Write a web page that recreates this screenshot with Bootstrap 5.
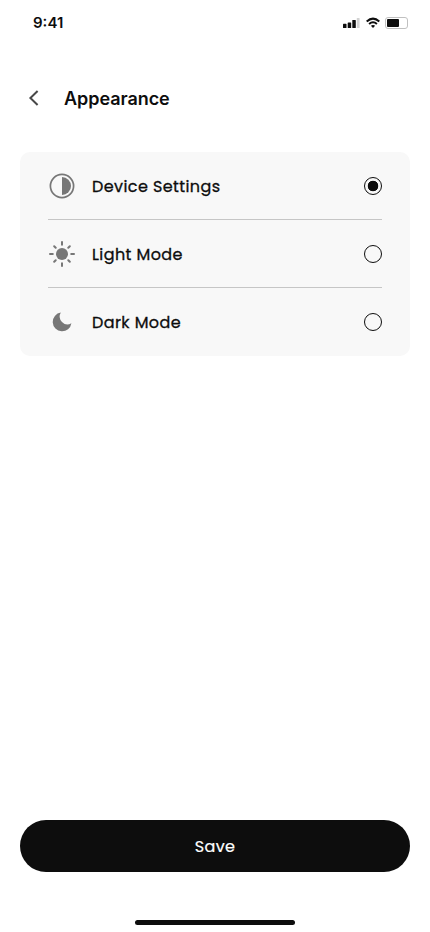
<!DOCTYPE html>
<html lang="en">
<head>
<meta charset="utf-8">
<meta name="viewport" content="width=device-width, initial-scale=1">
<title>Appearance</title>
<link href="https://cdn.jsdelivr.net/npm/bootstrap@5.3.0/dist/css/bootstrap.min.css" rel="stylesheet">
<style>
body{font-family:Inter,"Liberation Sans",sans-serif;color:#0d0d0d;height:932px;background:#fff;overflow:hidden}
svg{display:block;flex:none}
.status-bar{height:45px;padding:0 22px 0 33px}
.clock{font-size:15px;font-weight:600;line-height:20px;letter-spacing:0}
.page-head{height:107px;padding:0 28px}
.page-head svg{margin-bottom:1px}
.page-title{font-size:18px;font-weight:600;line-height:24px;margin:0 0 0 22px;letter-spacing:-.05px}
.options{margin:0 20px;padding:0 28px;background:#f8f8f8;border-radius:10px}
.option{height:68px;border-bottom:1px solid #c6c6c6;font-family:Poppins,Inter,sans-serif;font-size:16px;font-weight:400;cursor:pointer;-webkit-text-stroke:.3px #0d0d0d}
.option:last-child{border-bottom:0}
.option-name{margin-left:16px;padding-top:2px;letter-spacing:.41px}
.option .form-check-input{width:18px;height:18px;margin:0;border:1.25px solid #0d0d0d;background-color:transparent;box-shadow:none}
.option .form-check-input:checked{background-image:radial-gradient(circle,#0d0d0d 5px,transparent 5.6px);background-size:100% 100%;background-origin:border-box}
.save-btn{height:52px;margin:0 20px;padding-top:8px;background:#0d0d0d;color:#fff;font-family:Poppins,Inter,sans-serif;font-size:16px;font-weight:400;letter-spacing:.3px;-webkit-text-stroke:.2px #fff}
.save-btn:hover{background:#222;color:#fff}
.home-bar{width:160px;height:5px;margin:48px auto 7px;border-radius:3px;background:#0d0d0d}
</style>
</head>
<body class="d-flex flex-column">
<div class="status-bar d-flex align-items-center justify-content-between">
  <span class="clock">9:41</span>
  <svg width="65" height="12" viewBox="0 0 65 12" aria-hidden="true">
    <g fill="#0d0d0d"><rect y="6.8" width="3.5" height="4.2" rx=".6"/><rect x="4.7" y="5.4" width="3.5" height="5.6" rx=".6"/><rect x="9.3" y="3" width="3.5" height="8" rx=".6"/></g>
    <rect x="13.8" y="1" width="2.8" height="10" rx=".6" fill="#d2d2d2"/>
    <g fill="none" stroke="#0d0d0d" stroke-width="2"><path d="M23.7 4.5Q30 -1.2 36.3 4.5"/><path d="M26.1 7.1Q30 3.5 33.9 7.1"/></g>
    <path d="M27.9 8.8Q30 7.2 32.1 8.8L30 11Z" fill="#0d0d0d"/>
    <rect x="42.5" y=".5" width="22" height="11" rx="2.5" fill="#fff" stroke="#c0c0c0"/>
    <rect x="44" y="2" width="12" height="8" rx="1" fill="#0d0d0d"/>
  </svg>
</div>
<header class="page-head d-flex align-items-center">
  <svg width="14" height="16" viewBox="0 0 14 16" aria-label="Back"><path d="M9.6 1L2.4 8L9.6 15" fill="none" stroke="#484848" stroke-width="2"/></svg>
  <h1 class="page-title">Appearance</h1>
</header>
<main class="options">
  <label class="option d-flex align-items-center">
    <svg width="28" height="28" viewBox="0 0 28 28"><circle cx="14" cy="14" r="11.6" fill="none" stroke="#777" stroke-width="1.7"/><path d="M14 5a9 9 0 0 1 0 18Z" fill="#777"/></svg>
    <span class="option-name">Device Settings</span>
    <input class="form-check-input ms-auto" type="radio" name="theme" checked>
  </label>
  <label class="option d-flex align-items-center">
    <svg width="28" height="28" viewBox="0 0 28 28"><circle cx="14" cy="14" r="6" fill="#777"/><path d="M14 2v2.8M14 23.2V26M2 14h2.8M23.2 14H26M6.2 6.2l1.5 1.5M20.3 20.3l1.5 1.5M6.2 21.8l1.5-1.5M20.3 7.7l1.5-1.5" fill="none" stroke="#777" stroke-width="2" stroke-linecap="round"/></svg>
    <span class="option-name">Light Mode</span>
    <input class="form-check-input ms-auto" type="radio" name="theme">
  </label>
  <label class="option d-flex align-items-center">
    <svg width="28" height="28" viewBox="0 0 28 28"><path d="M12.8 4.6A9.4 9.4 0 1 0 23.4 15.3A7.8 7.8 0 0 1 12.8 4.6Z" fill="#777"/></svg>
    <span class="option-name">Dark Mode</span>
    <input class="form-check-input ms-auto" type="radio" name="theme">
  </label>
</main>
<button type="button" class="save-btn btn rounded-pill border-0 mt-auto">Save</button>
<div class="home-bar"></div>
<script src="https://cdn.jsdelivr.net/npm/bootstrap@5.3.0/dist/js/bootstrap.bundle.min.js"></script>
</body>
</html>
